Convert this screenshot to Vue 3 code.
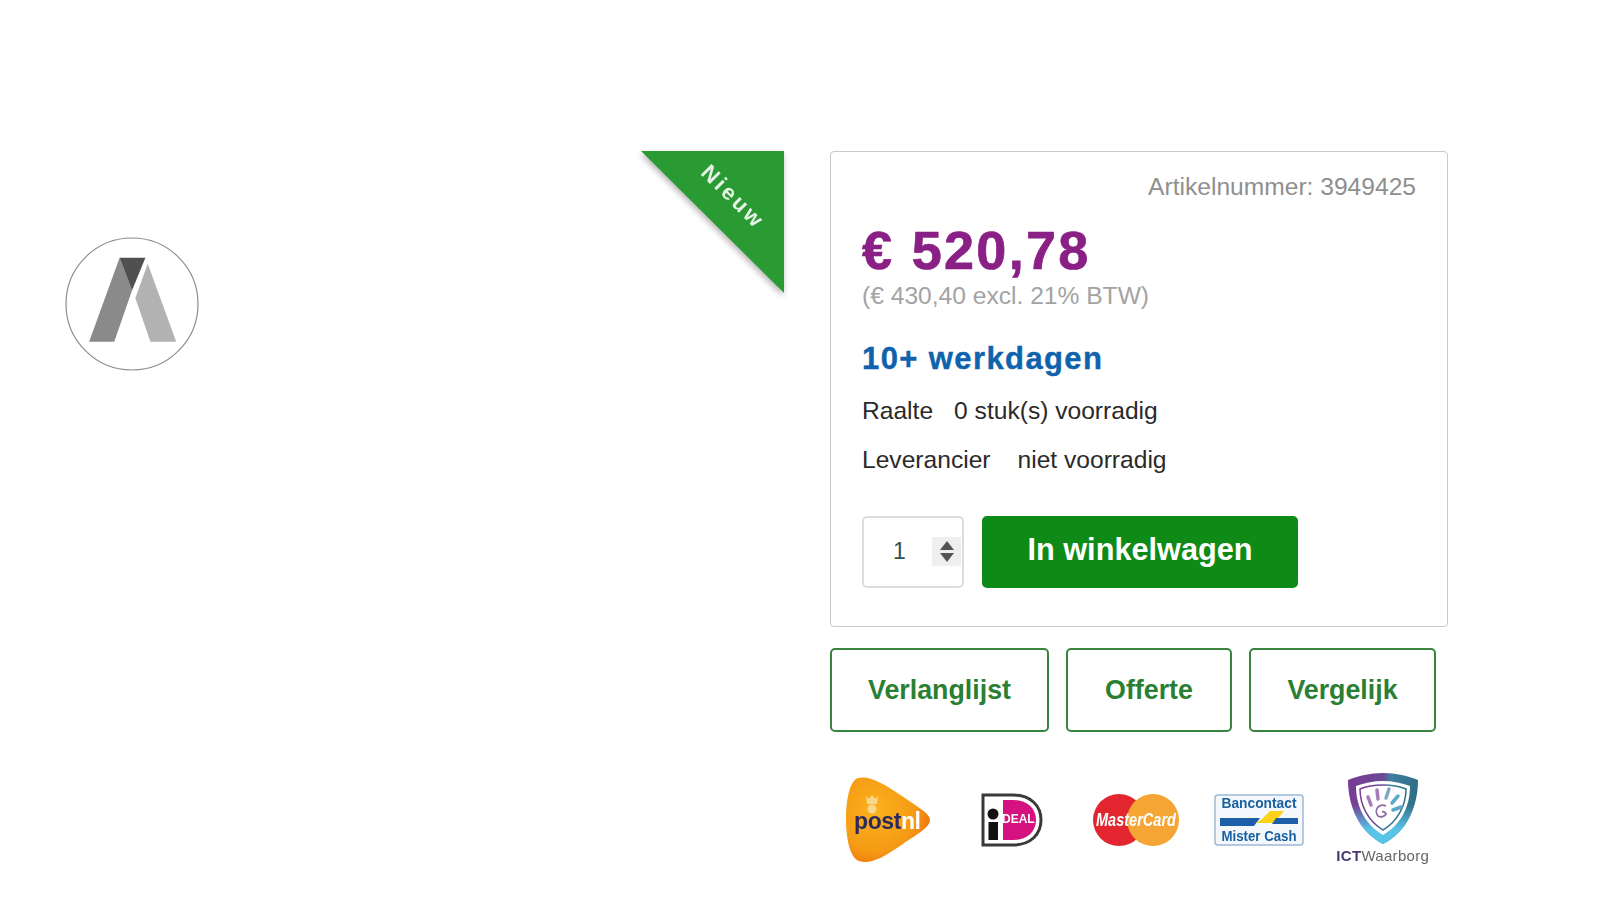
<template>
  <main class="product">
    <section class="gallery">
      <div class="thumbs">
        <svg class="brand" viewBox="0 0 400 400" aria-label="Merk">
          <circle cx="200" cy="200" r="197" fill="#fff" stroke="#8c8c8c" stroke-width="3.5" />
          <path d="M163 62 L72 313 H147 L200 160 Z" fill="#8a8a8a" />
          <path d="M163 62 H240 L200 160 Z" fill="#505050" />
          <path d="M247 80 L332 313 H255 L210 182 Z" fill="#b2b2b2" />
        </svg>
      </div>
      <div class="ribbon-wrap">
        <div class="ribbon"></div>
        <span class="ribbon-text">Nieuw</span>
      </div>
    </section>

    <section class="buy">
      <div class="card">
        <p class="sku">Artikelnummer: 3949425</p>
        <p class="price">€ 520,78</p>
        <p class="excl">(€ 430,40 excl. 21% BTW)</p>
        <p class="delivery">10+ werkdagen</p>
        <p class="stock"><span class="near">Raalte</span>0 stuk(s) voorradig</p>
        <p class="stock second"><span class="far">Leverancier</span>niet voorradig</p>
        <div class="order">
          <div class="qty">
            <span class="qty-value">1</span>
            <span class="stepper">
              <svg width="14" height="22" viewBox="0 0 14 22">
                <path d="M7 1 L14 10 H0 Z" fill="#555" />
                <path d="M0 13 H14 L7 22 Z" fill="#555" />
              </svg>
            </span>
          </div>
          <button class="add">In winkelwagen</button>
        </div>
      </div>

      <div class="actions">
        <button v-for="a in actions" :key="a.label" class="action" :class="a.cls">{{ a.label }}</button>
      </div>

      <div class="logos">
        <div class="logo low">
          <svg width="90" height="88" viewBox="0 0 90 88">
            <defs>
              <radialGradient id="pn" cx="0.35" cy="0.4" r="0.8">
                <stop offset="0" stop-color="#fbb21e" />
                <stop offset="0.6" stop-color="#f59a14" />
                <stop offset="1" stop-color="#e8600c" />
              </radialGradient>
            </defs>
            <path d="M14 2 C26 -1 40 8 58 20 C72 30 86 37 86 44 C86 52 70 60 56 70 C40 81 26 89 15 85 C6 82 2 62 2 44 C2 26 5 5 14 2 Z" fill="url(#pn)" />
            <path d="M22 20 l3 3 3-4 3 4 3-3 -1 8 h-10 Z" fill="#f8d88c" />
            <circle cx="28" cy="33" r="4.5" fill="#f8d88c" />
            <text x="10" y="53" class="pn-text"><tspan fill="#2a2a5c">post</tspan><tspan fill="#fff">nl</tspan></text>
          </svg>
        </div>
        <div class="logo low">
          <svg width="62" height="54" viewBox="0 0 62 54">
            <path d="M2 2 H32 C50 2 60 13 60 27 C60 41 50 52 32 52 H2 Z" fill="#fff" stroke="#3a3a3a" stroke-width="3" />
            <path d="M22 7 H32 C47 7 55 16 55 27 C55 38 47 47 32 47 H22 Z" fill="#d5127f" />
            <circle cx="12" cy="21" r="5.5" fill="#111" />
            <rect x="7.5" y="29" width="9.5" height="18" fill="#111" />
            <text x="21" y="30" class="ideal-text">DEAL</text>
          </svg>
        </div>
        <div class="logo low">
          <svg width="88" height="54" viewBox="0 0 88 54">
            <circle cx="27" cy="27" r="26" fill="#e2252e" />
            <circle cx="61" cy="27" r="26" fill="#f5a533" />
            <text x="4" y="33" class="mc-text" textLength="80" lengthAdjust="spacingAndGlyphs">MasterCard</text>
          </svg>
        </div>
        <div class="logo low">
          <svg width="90" height="52" viewBox="0 0 90 52">
            <rect x="1" y="1" width="88" height="50" rx="3" fill="#f4f8fc" stroke="#9db9d6" stroke-width="1.5" />
            <text x="7.5" y="14" class="bc-text" textLength="75" lengthAdjust="spacingAndGlyphs">Bancontact</text>
            <path d="M6 24 H46 L40 32 H6 Z" fill="#1c5fa8" />
            <path d="M48 25 L56 17 H70 L60 29 H42 Z" fill="#fcd116" />
            <path d="M62 24 H84 V30 H58 Z" fill="#1c5fa8" />
            <text x="7.5" y="47" class="bc-text" textLength="75" lengthAdjust="spacingAndGlyphs">Mister Cash</text>
          </svg>
        </div>
        <div class="logo ict">
          <svg width="74" height="74" viewBox="0 0 74 74">
            <defs>
              <linearGradient id="ict" x1="0" y1="0" x2="1" y2="0.2">
                <stop offset="0" stop-color="#7a3a93" />
                <stop offset="0.5" stop-color="#6a4a96" />
                <stop offset="0.6" stop-color="#3f7f9f" />
                <stop offset="1" stop-color="#2f6f86" />
              </linearGradient>
              <linearGradient id="ictb" x1="0" y1="0" x2="0" y2="1">
                <stop offset="0.45" stop-color="#58c4e8" stop-opacity="0" />
                <stop offset="0.8" stop-color="#58c4e8" />
              </linearGradient>
            </defs>
            <path d="M37 2 C50 2 62 5 72 9 C72 34 62 60 37 73 C12 60 2 34 2 9 C12 5 24 2 37 2 Z" fill="url(#ict)" />
            <path d="M37 2 C50 2 62 5 72 9 C72 34 62 60 37 73 C12 60 2 34 2 9 C12 5 24 2 37 2 Z" fill="url(#ictb)" />
            <path d="M37 10 C47 10 56 12 64 15 C64 34 56 53 37 64 C18 53 10 34 10 15 C18 12 27 10 37 10 Z" fill="#fff" />
            <path d="M37 14 C45 14 53 15 60 18 C60 34 52 50 37 59 C22 50 14 34 14 18 C21 15 29 14 37 14 Z" fill="#fff" stroke="url(#ict)" stroke-width="1.5" />
            <g stroke-width="3.5" stroke-linecap="round" fill="none">
              <path d="M25 34 L22 26" stroke="#a67cb8" />
              <path d="M32 28 L31 19" stroke="#a67cb8" />
              <path d="M40 27 L43 18" stroke="#7fa6c8" />
              <path d="M46 32 L52 25" stroke="#5aa9c9" />
              <path d="M47 39 L55 36" stroke="#5aa9c9" />
            </g>
            <path d="M36 41 a3 3 0 0 1 4 2 a6 6 0 0 1 -8 2 a7 7 0 0 1 0 -9 a7 7 0 0 1 8 -1" fill="none" stroke="#8f6aa8" stroke-width="1.8" />
          </svg>
          <p class="ict-text"><b>ICT</b>Waarborg</p>
        </div>
      </div>
    </section>
  </main>
</template>

<script setup>
const actions = [
  { label: 'Verlanglijst', cls: 'wish' },
  { label: 'Offerte', cls: 'quote' },
  { label: 'Vergelijk', cls: 'compare' }
]
</script>

<style>
html, body { background: #fff; }
</style>

<style scoped>
.product {
  display: flex;
  padding-top: 151px;
  font-family: "Liberation Sans", Arial, sans-serif;
  color: #222;
}

.gallery {
  position: relative;
  width: 830px;
  flex: none;
}

.thumbs {
  padding: 86px 0 0 65px;
}

.brand {
  display: block;
  width: 134px;
  height: 134px;
}

.ribbon-wrap {
  position: absolute;
  top: 0;
  right: 46px;
  width: 143px;
  height: 142px;
  filter: drop-shadow(-1px 3px 3px rgba(0, 0, 0, 0.3));
}

.ribbon {
  width: 100%;
  height: 100%;
  background: #2a9a32;
  clip-path: polygon(0 0, 100% 0, 100% 100%);
}

.ribbon-text {
  position: absolute;
  left: 92px;
  top: 46px;
  transform: translate(-50%, -50%) rotate(45deg);
  color: #e4f5e5;
  font-size: 22px;
  font-weight: 700;
  letter-spacing: 3px;
}

.buy {
  width: 620px;
  flex: none;
}

.card {
  box-sizing: border-box;
  width: 618px;
  padding: 20px 31px 38px;
  border: 1px solid #c9c9c9;
  border-radius: 4px;
}

.card p {
  margin: 0;
}

.card .sku {
  text-align: right;
  font-size: 24.6px;
  line-height: 30px;
  color: #8f8f8f;
}

.card .price {
  margin-top: 18px;
  font-size: 54px;
  line-height: 60px;
  font-weight: 700;
  color: #8a1f85;
  letter-spacing: 2.3px;
  -webkit-text-stroke: 0.7px #8a1f85;
}

.card .excl {
  margin-top: 1px;
  font-size: 24.6px;
  line-height: 30px;
  color: #a3a3a3;
}

.card .delivery {
  margin-top: 30px;
  font-size: 31px;
  line-height: 36px;
  font-weight: 700;
  color: #0f62ac;
  letter-spacing: 1.4px;
  -webkit-text-stroke: 0.4px #0f62ac;
}

.card .stock {
  margin-top: 19px;
  font-size: 24.6px;
  line-height: 30px;
  color: #2a2a2a;
}

.card .second {
  margin-top: 19px;
}

.near { margin-right: 21px; }
.far { margin-right: 27px; }

.order {
  display: flex;
  gap: 18px;
  margin-top: 41px;
}

.qty {
  box-sizing: border-box;
  display: flex;
  align-items: center;
  justify-content: space-between;
  width: 102px;
  height: 72px;
  padding: 0 1px 0 29px;
  border: 2px solid #dcdcdc;
  border-radius: 5px;
  font-size: 23px;
  color: #33514f;
}

.qty-value,
.stepper {
  margin-bottom: 2px;
}

.stepper {
  display: flex;
  align-items: center;
  justify-content: center;
  width: 29px;
  height: 29px;
  background: #efefef;
}

.add {
  width: 316px;
  height: 72px;
  padding: 0 0 4px;
  border: none;
  border-radius: 5px;
  background: #0e8a17;
  color: #fff;
  font-family: inherit;
  font-size: 30.7px;
  font-weight: 700;
}

.actions {
  display: flex;
  gap: 17px;
  margin-top: 21px;
}

.action {
  box-sizing: border-box;
  height: 84px;
  border: 2px solid #39853f;
  border-radius: 5px;
  background: #fff;
  color: #2b7f33;
  font-family: inherit;
  font-size: 26.8px;
  font-weight: 700;
}

.wish { width: 219px; }
.quote { width: 166px; }
.compare { width: 187px; }

.logos {
  display: grid;
  grid-template-columns: repeat(5, 123.5px);
  align-items: center;
  justify-items: center;
  margin: 38px 0 0 -3px;
}

.logo {
  filter: blur(0.4px);
}

.low {
  margin-top: 6px;
}

.logo svg {
  display: block;
  overflow: visible;
}

.ict {
  display: flex;
  flex-direction: column;
  align-items: center;
}

.ict-text {
  margin: 2px 0 0;
  font-size: 15px;
  letter-spacing: 0.3px;
  color: #666;
  white-space: nowrap;
}

.ict-text b {
  color: #4b3a70;
}

.pn-text {
  font-size: 23px;
  font-weight: 700;
  font-family: "Liberation Sans", sans-serif;
  letter-spacing: -0.4px;
}

.ideal-text {
  font-size: 12px;
  font-weight: 700;
  fill: #fff;
  font-family: "Liberation Sans", sans-serif;
}

.mc-text {
  font-size: 19px;
  font-weight: 700;
  font-style: italic;
  fill: #fff;
  font-family: "Liberation Sans", sans-serif;
}

.bc-text {
  font-size: 14px;
  font-weight: 700;
  fill: #17609f;
  font-family: "Liberation Sans", sans-serif;
}
</style>
